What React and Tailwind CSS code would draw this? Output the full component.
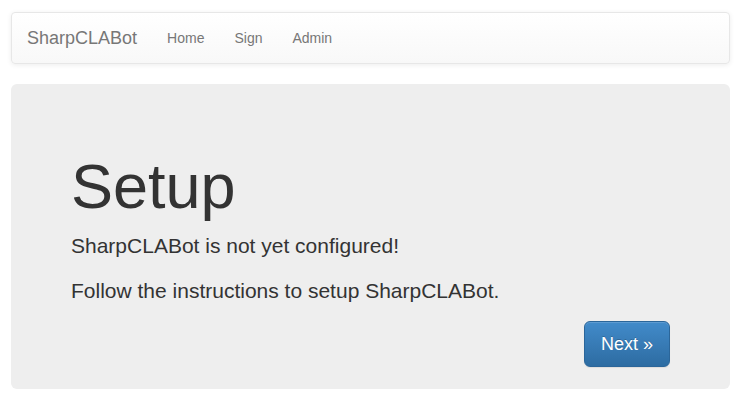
import React from 'react';

const App = () => {
    const links = ['Home', 'Sign', 'Admin'];

    return (
        <div className="min-h-screen bg-white pl-[11px] pr-[10px] pt-[12px] text-[14px] text-[#333] font-['Liberation_Sans',Arial,sans-serif]">
            <nav className="flex items-center h-[52px] mb-[20px] rounded-[4px] border border-[#e7e7e7] bg-gradient-to-b from-white to-[#f8f8f8] shadow-[inset_0_1px_0_rgba(255,255,255,0.15),0_1px_5px_rgba(0,0,0,0.075)]">
                <a href="#" className="px-[15px] text-[18px] leading-[20px] text-[#777]">
                    SharpCLABot
                </a>
                <ul className="flex">
                    {links.map((l) => (
                        <li key={l}>
                            <a href="#" className="block px-[15px] leading-[20px] text-[#777]">
                                {l}
                            </a>
                        </li>
                    ))}
                </ul>
            </nav>

            <div className="rounded-[6px] bg-[#eee] px-[60px] pt-[68px] pb-[22px]">
                <h1 className="mb-[10px] text-[63px] leading-[69px] text-[#333]">Setup</h1>
                <p className="mb-[15px] text-[21px] leading-[30px]">SharpCLABot is not yet configured!</p>
                <p className="mb-[15px] text-[21px] leading-[30px]">Follow the instructions to setup SharpCLABot.</p>
                <div className="flex justify-end">
                    <a
                        href="#"
                        className="block rounded-[6px] border border-[#2b669a] bg-gradient-to-b from-[#428bca] to-[#2d6ca2] px-[16px] py-[10px] text-[18px] leading-[24px] text-white [text-shadow:0_-1px_0_rgba(0,0,0,0.2)] shadow-[inset_0_1px_0_rgba(255,255,255,0.15),0_1px_1px_rgba(0,0,0,0.075)]"
                    >
                        Next &raquo;
                    </a>
                </div>
            </div>
        </div>
    );
};

export default App;
